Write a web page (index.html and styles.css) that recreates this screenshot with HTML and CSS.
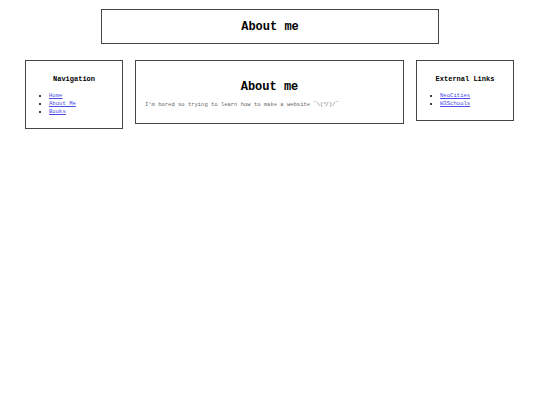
FILE: index.html
```html
<!DOCTYPE html>
<html>
<head>
<meta charset="utf-8">
<link rel="stylesheet" href="styles.css">
</head>
<body>
<header class="top">
  <h1 class="top-title">About me</h1>
</header>
<div class="columns">
  <nav class="box side">
    <h2 class="side-title">Navigation</h2>
    <ul class="links">
      <li><a href="#">Home</a></li>
      <li><a href="#">About Me</a></li>
      <li><a href="#">Books</a></li>
    </ul>
  </nav>
  <main class="box main">
    <h1 class="main-title">About me</h1>
    <p class="text">I'm bored so trying to learn how to make a website ¯\(ツ)/¯</p>
  </main>
  <aside class="box side">
    <h2 class="side-title">External Links</h2>
    <ul class="links">
      <li><a href="#">NeoCities</a></li>
      <li><a href="#">W3Schools</a></li>
    </ul>
  </aside>
</div>
</body>
</html>
```
FILE: styles.css
```css
html, body {
  margin: 0;
  padding: 0;
  background: #fff;
}
body {
  font-family: "Courier New", "Nimbus Mono PS", "FreeMono", "Liberation Mono", "Noto Sans CJK JP", monospace;
  color: #000;
}
.top {
  box-sizing: border-box;
  width: 338px;
  height: 35px;
  margin: 9px auto 0;
  border: 1px solid #444;
  display: flex;
  align-items: center;
  justify-content: center;
}
.top-title {
  margin: 0;
  font-size: 12px;
  line-height: 14px;
  font-weight: bold;
}
.columns {
  display: flex;
  align-items: flex-start;
  gap: 12px;
  padding: 0 26px 0 25px;
  margin-top: 16px;
}
.box {
  box-sizing: border-box;
  border: 1px solid #444;
}
.side {
  width: 98px;
  padding: 14px 0 12px;
}
.side-title {
  margin: 0;
  text-align: center;
  font-size: 7px;
  line-height: 8px;
  font-weight: bold;
}
.links {
  margin: 9px 0 0;
  padding-left: 23px;
  font-size: 5.6px;
  line-height: 8px;
}
.links a {
  color: #4a4ae8;
}
.main {
  flex: 1;
  padding: 19px 9px 15px;
}
.main-title {
  margin: 0;
  text-align: center;
  font-size: 12px;
  line-height: 14px;
  font-weight: bold;
}
.text {
  margin: 7px 0 0;
  font-size: 5.5px;
  line-height: 7px;
  color: #666;
}
```
